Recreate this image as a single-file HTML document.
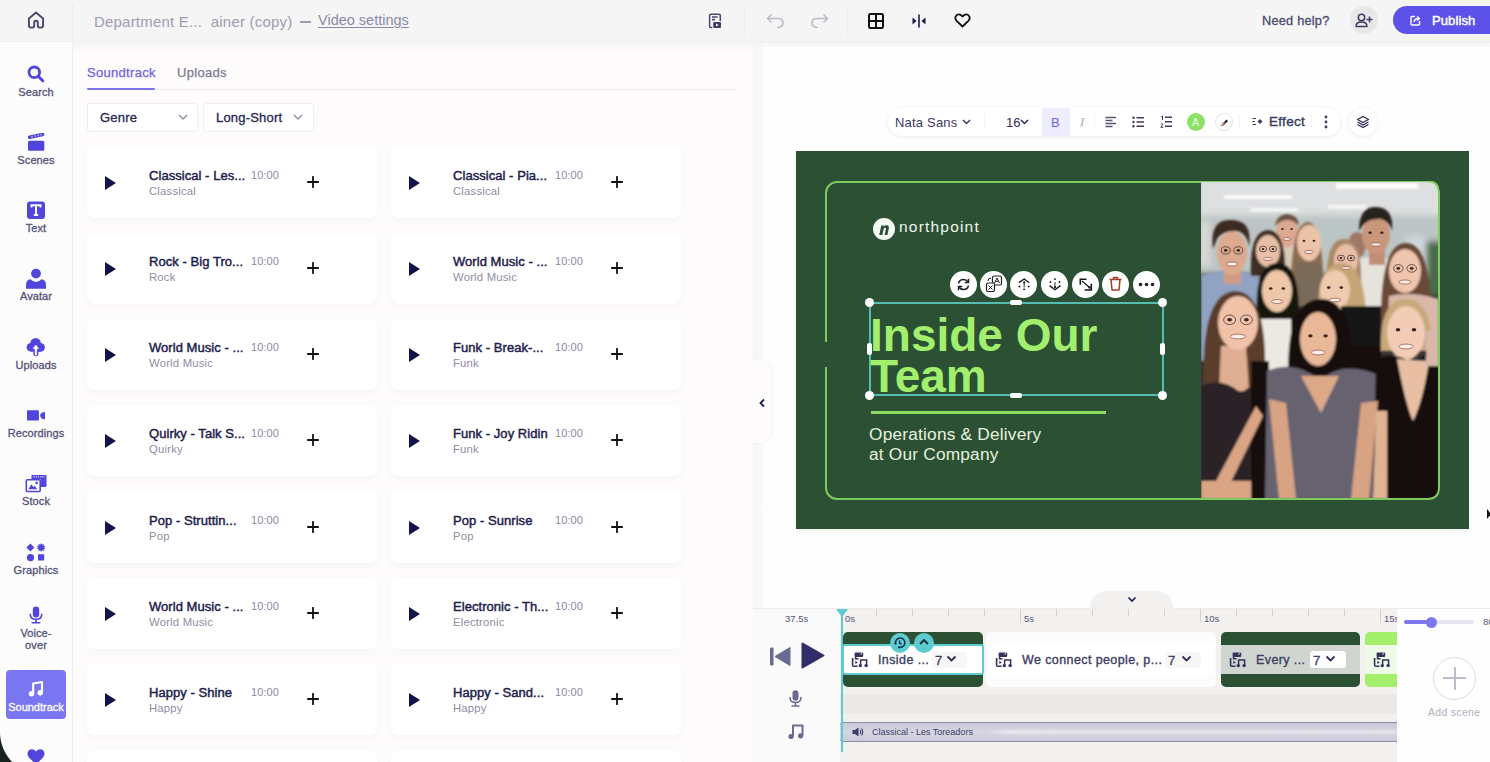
<!DOCTYPE html>
<html><head><meta charset="utf-8">
<style>
*{margin:0;padding:0;box-sizing:border-box}
html,body{width:1490px;height:762px;overflow:hidden;background:#fbf9f9;font-family:"Liberation Sans",sans-serif;position:relative}
body>div{position:absolute}
#hdr{left:0;top:0;width:1490px;height:42px;background:#f5f5f5;border-bottom:1px solid #efeeed}
#side{left:0;top:42px;width:73px;height:720px;background:#fdfcfc;border-right:1px solid #f1eeee}
.si{position:absolute;left:0;width:72px;text-align:center;font-size:11px;color:#525276;-webkit-text-stroke:0.3px #525276;letter-spacing:0.1px}
.sic{position:absolute;left:26px;width:20px;height:20px}
#panel{left:73px;top:42px;width:682px;height:720px;background:#fdfbfb}
.card{position:absolute;width:290px;height:71px;background:#fff;border-radius:7px;box-shadow:0 3px 6px rgba(140,110,110,0.05)}
.card .pl{position:absolute;left:18px;top:29px;width:0;height:0;border-left:11px solid #14134a;border-top:7px solid transparent;border-bottom:7px solid transparent}
.card .t{position:absolute;left:62px;top:20.5px;font-size:13px;color:#1d1c4c;white-space:nowrap;-webkit-text-stroke:0.45px #1d1c4c;letter-spacing:0.05px}
.card .s{position:absolute;left:62px;top:37.5px;font-size:11.3px;color:#8e8da2;white-space:nowrap;letter-spacing:0.2px}
.card .d{position:absolute;left:164px;top:21.5px;font-size:11px;color:#8b8aa0;letter-spacing:0.1px}
.card .p{position:absolute;left:219.5px;top:28.7px}
.clipicon{position:absolute;width:17px;height:15px}
.clipicon:before{content:"";position:absolute;left:0;top:4px;width:8px;height:10px;border-left:2px solid #3c3b62;border-bottom:2px solid #3c3b62}
.clipicon:after{content:"";position:absolute;left:4px;top:0;width:9px;height:7px;background:#3c3b62;border-radius:1px}

</style></head><body>
<div id="hdr"></div>
<svg style="position:absolute;left:27px;top:11px" width="18" height="18" viewBox="0 0 18 18"><path d="M1.9 7.6 L9 1.6 L16.1 7.6 V14.6 Q16.1 16.6 14.1 16.6 H12.6 Q10.8 16.6 10.8 14.6 V12 Q10.8 9.8 9 9.8 Q7.2 9.8 7.2 12 V14.6 Q7.2 16.6 5.4 16.6 H3.9 Q1.9 16.6 1.9 14.6 Z" fill="none" stroke="#47456c" stroke-width="1.9" stroke-linejoin="round"/></svg>
<div style="left:72px;top:4px;width:1px;height:34px;background:#eceaea"></div>
<div style="left:94px;top:12.5px;font-size:15px;color:#9d9cb0;white-space:nowrap;letter-spacing:0.2px">Department E...&nbsp; ainer (copy)</div><div style="left:300px;top:21px;width:11px;height:1.5px;background:#9d9cb0"></div><div style="left:318px;top:12px;font-size:14.5px;color:#8b8aa6;white-space:nowrap;letter-spacing:0px;text-decoration:underline;text-underline-offset:2px">Video settings</div>
<svg style="position:absolute;left:708px;top:13px" width="14" height="16" viewBox="0 0 14 16"><path d="M12.3 8 V2.6 Q12.3 1.3 11 1.3 H3 Q1.6 1.3 1.6 2.6 V13.4 Q1.6 14.6 3 14.6 H4.3" fill="none" stroke="#4a4872" stroke-width="1.5"/><path d="M4 4 H9.5 M4 6.6 H7" stroke="#4a4872" stroke-width="1.6"/><rect x="5.2" y="9" width="7.8" height="6" rx="1" fill="#3f3d68"/><path d="M8 10.4 L10.6 12 L8 13.6Z" fill="#fff"/></svg>
<div style="left:744px;top:6px;width:1px;height:30px;background:#efeded"></div>
<svg style="position:absolute;left:766px;top:13px" width="20" height="16" viewBox="0 0 20 16"><path d="M5 2 L1.5 5.5 L5 9 M1.8 5.5 H12 Q17 5.5 17 10 Q17 14 12 14.5" fill="none" stroke="#bdbcc9" stroke-width="1.7" stroke-linecap="round" stroke-linejoin="round"/></svg>
<svg style="position:absolute;left:809px;top:13px" width="20" height="16" viewBox="0 0 20 16"><path d="M15 2 L18.5 5.5 L15 9 M18.2 5.5 H8 Q3 5.5 3 10 Q3 14 8 14.5" fill="none" stroke="#bdbcc9" stroke-width="1.7" stroke-linecap="round" stroke-linejoin="round"/></svg>
<div style="left:847px;top:6px;width:1px;height:30px;background:#efeded"></div>
<svg style="position:absolute;left:868px;top:13px" width="16" height="16" viewBox="0 0 16 16"><rect x="1" y="1" width="14" height="14" rx="1.2" fill="none" stroke="#111" stroke-width="2"/><path d="M8 1 V15 M1 8 H15" stroke="#111" stroke-width="2"/></svg>
<svg style="position:absolute;left:911px;top:13px" width="16" height="16" viewBox="0 0 16 16"><path d="M8 1.5 V14.5" stroke="#1b1a4e" stroke-width="1.6"/><path d="M1.5 4.5 L5.5 8 L1.5 11.5Z M14.5 4.5 L10.5 8 L14.5 11.5Z" fill="#1b1a4e"/></svg>
<svg style="position:absolute;left:954px;top:13px" width="17" height="15" viewBox="0 0 17 15"><path d="M8.5 13.5 L2.6 7.8 Q0.5 5.6 1.8 3.2 Q3.4 0.8 6 1.6 Q7.6 2.2 8.5 3.6 Q9.4 2.2 11 1.6 Q13.6 0.8 15.2 3.2 Q16.5 5.6 14.4 7.8 Z" fill="none" stroke="#111" stroke-width="1.8" stroke-linejoin="round"/></svg>
<div style="left:1262px;top:12.5px;font-size:12.8px;color:#4a4a6c;white-space:nowrap;letter-spacing:0.2px;-webkit-text-stroke:0.3px #4a4a6c">Need help?</div>
<div style="left:1350px;top:6px;width:28px;height:28px;border-radius:14px;background:#e9e7e7"></div>
<svg style="position:absolute;left:1355px;top:13px" width="18" height="15" viewBox="0 0 18 15"><circle cx="6.5" cy="4.5" r="3.2" fill="none" stroke="#3f3e66" stroke-width="1.5"/><path d="M1 13.5 Q1 9 6.5 9 Q12 9 12 13.5 Z" fill="none" stroke="#3f3e66" stroke-width="1.5" stroke-linejoin="round"/><path d="M14.5 3.5 V9.5 M11.5 6.5 H17.5" stroke="#3f3e66" stroke-width="1.5"/></svg>
<div style="left:1393px;top:6px;width:120px;height:28px;border-radius:14px;background:#5c51e8"></div>
<svg style="position:absolute;left:1410px;top:15px" width="11" height="11" viewBox="0 0 11 11"><path d="M5 1.5 H2 Q1 1.5 1 2.5 V9 Q1 10 2 10 H8.5 Q9.5 10 9.5 9 V6" fill="none" stroke="#fff" stroke-width="1.4"/><path d="M4 7 Q4.5 3.5 8.5 3.5 M7 1.5 L9.5 3.5 L7 5.5" fill="none" stroke="#fff" stroke-width="1.4" stroke-linejoin="round"/></svg>
<div style="left:1432px;top:12.5px;font-size:13px;color:#fff;white-space:nowrap;letter-spacing:0.1px;-webkit-text-stroke:0.45px #fff">Publish</div>

<div id="side"></div>
<svg style="position:absolute;left:27px;top:65px" width="18" height="18" viewBox="0 0 18 18"><circle cx="7.3" cy="7.3" r="5.3" fill="none" stroke="#5046dc" stroke-width="2.8"/><path d="M11.2 11.2 L15.8 15.8" stroke="#5046dc" stroke-width="3" stroke-linecap="round"/></svg>
<div class="si" style="top:86px">Search</div>
<svg style="position:absolute;left:27px;top:133px" width="19" height="19" viewBox="0 0 19 19"><path d="M2.6 4.2 L15.6 1.5" stroke="#5046dc" stroke-width="3.5" stroke-linecap="round"/><path d="M4.5 3.8 L5.5 3.6 M7.6 3.15 L8.6 2.95 M10.7 2.5 L11.7 2.3 M13.6 1.9 L14.4 1.75" stroke="#fff" stroke-width="1.3"/><rect x="1" y="7.7" width="16.3" height="10.1" rx="1.5" fill="#5046dc"/></svg>
<div class="si" style="top:154px">Scenes</div>
<svg style="position:absolute;left:27px;top:201px" width="18" height="18" viewBox="0 0 18 18"><rect x="0" y="0.5" width="18" height="17.5" rx="3" fill="#5046dc"/><path d="M4.5 6.5 V4.3 H13.5 V6.5 M9 4.3 V14 M6.8 14 H11.2" fill="none" stroke="#fff" stroke-width="1.9"/></svg>
<div class="si" style="top:222px">Text</div>
<svg style="position:absolute;left:26px;top:268px" width="20" height="21" viewBox="0 0 20 21"><circle cx="10" cy="5.6" r="4.9" fill="#5046dc"/><path d="M0 20.7 V17 Q0 11.6 4.6 11.2 Q7 13.9 10 13.9 Q13 13.9 15.4 11.2 Q20 11.6 20 17 V20.7 Z" fill="#5046dc"/></svg>
<div class="si" style="top:290px">Avatar</div>
<svg style="position:absolute;left:26px;top:337px" width="20" height="20" viewBox="0 0 20 20"><circle cx="9.6" cy="6.3" r="5.3" fill="#5046dc"/><circle cx="4.9" cy="10.3" r="4.3" fill="#5046dc"/><circle cx="14.5" cy="10.3" r="4.4" fill="#5046dc"/><rect x="4.9" y="8" width="9.6" height="6.7" fill="#5046dc"/><rect x="7.3" y="10" width="5.1" height="9.2" rx="2.5" fill="#5046dc"/><path d="M9.85 17.4 V10" stroke="#fff" stroke-width="2.1" stroke-linecap="round"/><path d="M7.1 11.6 L9.85 8.1 L12.6 11.6 Z" fill="#fff" stroke="#fff" stroke-width="0.6" stroke-linejoin="round"/></svg>
<div class="si" style="top:359px">Uploads</div>
<svg style="position:absolute;left:27px;top:410px" width="19" height="11" viewBox="0 0 19 11"><rect x="0" y="0.3" width="11.9" height="10.3" rx="0.6" fill="#5046dc"/><path d="M13.2 5.6 Q13.2 3.4 15.2 2.6 L18 1.9 V9.6 L15.2 8.7 Q13.2 8 13.2 5.6 Z" fill="#5046dc"/></svg>
<div class="si" style="top:427px">Recordings</div>
<svg style="position:absolute;left:25px;top:474px" width="22" height="19" viewBox="0 0 22 19"><rect x="6.5" y="1" width="15" height="12" rx="1.2" fill="#5046dc"/><path d="M8.5 2.8 H20" stroke="#fff" stroke-width="1" stroke-dasharray="1.2 1"/><rect x="0.5" y="5" width="15.5" height="13.3" rx="1.3" fill="#fff"/><rect x="1.3" y="5.8" width="13.9" height="11.7" rx="1" fill="none" stroke="#5046dc" stroke-width="1.6"/><path d="M3.4 15.2 L6.3 10.3 L8.4 13 L9.6 11.8 L12.3 15.2 Z" fill="#5046dc"/><circle cx="11.7" cy="8.9" r="1.3" fill="#5046dc"/></svg>
<div class="si" style="top:495px">Stock</div>
<svg style="position:absolute;left:26px;top:543px" width="20" height="19" viewBox="0 0 20 19"><path d="M4.4 0.5 L8.4 4.5 L4.4 8.5 L0.4 4.5 Z" fill="#5046dc"/><path d="M15.10 0.00 L16.03 1.65 L17.75 0.86 L17.53 2.74 L19.38 3.11 L18.10 4.50 L19.38 5.89 L17.53 6.26 L17.75 8.14 L16.03 7.35 L15.10 9.00 L14.17 7.35 L12.45 8.14 L12.67 6.26 L10.82 5.89 L12.10 4.50 L10.82 3.11 L12.67 2.74 L12.45 0.86 L14.17 1.65 Z" fill="#5046dc"/><circle cx="4.5" cy="14.6" r="3.6" fill="#5046dc"/><rect x="12" y="11.2" width="6.2" height="6.4" rx="0.5" fill="#5046dc"/></svg>
<div class="si" style="top:564px">Graphics</div>
<svg style="position:absolute;left:29px;top:606px" width="14" height="18" viewBox="0 0 14 18"><rect x="3.8" y="0.5" width="6.4" height="11" rx="3.2" fill="#5046dc"/><path d="M1.3 8.2 Q1.3 13.3 7 13.3 Q12.7 13.3 12.7 8.2 M7 13.3 V16.5 M3.3 16.7 H10.7" fill="none" stroke="#5046dc" stroke-width="1.6" stroke-linecap="round"/></svg>
<div class="si" style="top:627px;line-height:12px">Voice-<br>over</div>
<div style="left:6px;top:670px;width:60px;height:49px;border-radius:4px;background:#7a76f1"></div>
<svg style="position:absolute;left:28px;top:681px" width="16" height="16" viewBox="0 0 16 16"><path d="M5.2 12.5 V2.5 L14 1 V11.5" fill="none" stroke="#fff" stroke-width="2.1" stroke-linejoin="round"/><circle cx="3.5" cy="12.7" r="2.7" fill="#fff"/><circle cx="12.2" cy="11.8" r="2.7" fill="#fff"/></svg>
<div class="si" style="top:701px;color:#fff;-webkit-text-stroke:0.3px #fff;left:6px;width:60px;font-size:11px;letter-spacing:0">Soundtrack</div>
<svg style="position:absolute;left:27px;top:749px" width="18" height="16" viewBox="0 0 18 16"><path d="M9 15.5 L2.4 9 Q0 6.5 0.6 3.8 Q1.4 0.4 4.8 0.3 Q7.4 0.3 9 2.6 Q10.6 0.3 13.2 0.3 Q16.6 0.4 17.4 3.8 Q18 6.5 15.6 9 Z" fill="#5046dc"/></svg>
<div style="left:0;top:732px;width:46px;height:30px;background:radial-gradient(circle at 43px 0px, rgba(0,0,0,0) 42.5px, #16241d 43.5px)"></div>

<div id="panel"></div>
<div id="hdrshadow" style="left:73px;top:42px;width:680px;height:10px;background:linear-gradient(180deg,#f6f5f4,rgba(253,251,251,0))"></div>
<div style="left:87px;top:65px;font-size:13px;color:#6d63dd;white-space:nowrap;letter-spacing:0.3px;-webkit-text-stroke:0.25px #6d63dd">Soundtrack</div>
<div style="left:177px;top:65px;font-size:13px;color:#7c7b92;white-space:nowrap;letter-spacing:0.3px;-webkit-text-stroke:0.25px #7c7b92">Uploads</div>
<div style="left:87px;top:89px;width:648px;height:1px;background:#eeeaea"></div>
<div style="left:87px;top:88px;width:68px;height:2px;background:#7d76ea;border-radius:1px"></div>
<div style="left:87px;top:103px;width:111px;height:29px;background:#fff;border:1px solid #f1eeee;border-radius:3px"></div>
<div style="left:100px;top:110px;font-size:13px;color:#262650;white-space:nowrap;letter-spacing:0.2px;-webkit-text-stroke:0.3px #262650">Genre</div>
<svg style="position:absolute;left:178px;top:114px" width="10" height="6" viewBox="0 0 10 6"><path d="M1 1 L5 5 L9 1" fill="none" stroke="#8b8aa0" stroke-width="1.3"/></svg>
<div style="left:203px;top:103px;width:111px;height:29px;background:#fff;border:1px solid #f1eeee;border-radius:3px"></div>
<div style="left:216px;top:110px;font-size:13px;color:#262650;white-space:nowrap;letter-spacing:0.2px;-webkit-text-stroke:0.3px #262650">Long-Short</div>
<svg style="position:absolute;left:293px;top:114px" width="10" height="6" viewBox="0 0 10 6"><path d="M1 1 L5 5 L9 1" fill="none" stroke="#8b8aa0" stroke-width="1.3"/></svg>

<div class="card" style="left:87px;top:147px"><div class="pl"></div><div class="t">Classical - Les...</div><div class="s">Classical</div><div class="d">10:00</div><svg class="p" width="12" height="12" viewBox="0 0 12 12"><path d="M6 0.8 V11.2 M0.8 6 H11.2" stroke="#111" stroke-width="1.8" stroke-linecap="round"/></svg></div>
<div class="card" style="left:391px;top:147px"><div class="pl"></div><div class="t">Classical - Pia...</div><div class="s">Classical</div><div class="d">10:00</div><svg class="p" width="12" height="12" viewBox="0 0 12 12"><path d="M6 0.8 V11.2 M0.8 6 H11.2" stroke="#111" stroke-width="1.8" stroke-linecap="round"/></svg></div>
<div class="card" style="left:87px;top:233px"><div class="pl"></div><div class="t">Rock - Big Tro...</div><div class="s">Rock</div><div class="d">10:00</div><svg class="p" width="12" height="12" viewBox="0 0 12 12"><path d="M6 0.8 V11.2 M0.8 6 H11.2" stroke="#111" stroke-width="1.8" stroke-linecap="round"/></svg></div>
<div class="card" style="left:391px;top:233px"><div class="pl"></div><div class="t">World Music - ...</div><div class="s">World Music</div><div class="d">10:00</div><svg class="p" width="12" height="12" viewBox="0 0 12 12"><path d="M6 0.8 V11.2 M0.8 6 H11.2" stroke="#111" stroke-width="1.8" stroke-linecap="round"/></svg></div>
<div class="card" style="left:87px;top:319px"><div class="pl"></div><div class="t">World Music - ...</div><div class="s">World Music</div><div class="d">10:00</div><svg class="p" width="12" height="12" viewBox="0 0 12 12"><path d="M6 0.8 V11.2 M0.8 6 H11.2" stroke="#111" stroke-width="1.8" stroke-linecap="round"/></svg></div>
<div class="card" style="left:391px;top:319px"><div class="pl"></div><div class="t">Funk - Break-...</div><div class="s">Funk</div><div class="d">10:00</div><svg class="p" width="12" height="12" viewBox="0 0 12 12"><path d="M6 0.8 V11.2 M0.8 6 H11.2" stroke="#111" stroke-width="1.8" stroke-linecap="round"/></svg></div>
<div class="card" style="left:87px;top:405px"><div class="pl"></div><div class="t">Quirky - Talk S...</div><div class="s">Quirky</div><div class="d">10:00</div><svg class="p" width="12" height="12" viewBox="0 0 12 12"><path d="M6 0.8 V11.2 M0.8 6 H11.2" stroke="#111" stroke-width="1.8" stroke-linecap="round"/></svg></div>
<div class="card" style="left:391px;top:405px"><div class="pl"></div><div class="t">Funk - Joy Ridin</div><div class="s">Funk</div><div class="d">10:00</div><svg class="p" width="12" height="12" viewBox="0 0 12 12"><path d="M6 0.8 V11.2 M0.8 6 H11.2" stroke="#111" stroke-width="1.8" stroke-linecap="round"/></svg></div>
<div class="card" style="left:87px;top:492px"><div class="pl"></div><div class="t">Pop - Struttin...</div><div class="s">Pop</div><div class="d">10:00</div><svg class="p" width="12" height="12" viewBox="0 0 12 12"><path d="M6 0.8 V11.2 M0.8 6 H11.2" stroke="#111" stroke-width="1.8" stroke-linecap="round"/></svg></div>
<div class="card" style="left:391px;top:492px"><div class="pl"></div><div class="t">Pop - Sunrise</div><div class="s">Pop</div><div class="d">10:00</div><svg class="p" width="12" height="12" viewBox="0 0 12 12"><path d="M6 0.8 V11.2 M0.8 6 H11.2" stroke="#111" stroke-width="1.8" stroke-linecap="round"/></svg></div>
<div class="card" style="left:87px;top:578px"><div class="pl"></div><div class="t">World Music - ...</div><div class="s">World Music</div><div class="d">10:00</div><svg class="p" width="12" height="12" viewBox="0 0 12 12"><path d="M6 0.8 V11.2 M0.8 6 H11.2" stroke="#111" stroke-width="1.8" stroke-linecap="round"/></svg></div>
<div class="card" style="left:391px;top:578px"><div class="pl"></div><div class="t">Electronic - Th...</div><div class="s">Electronic</div><div class="d">10:00</div><svg class="p" width="12" height="12" viewBox="0 0 12 12"><path d="M6 0.8 V11.2 M0.8 6 H11.2" stroke="#111" stroke-width="1.8" stroke-linecap="round"/></svg></div>
<div class="card" style="left:87px;top:664px"><div class="pl"></div><div class="t">Happy - Shine</div><div class="s">Happy</div><div class="d">10:00</div><svg class="p" width="12" height="12" viewBox="0 0 12 12"><path d="M6 0.8 V11.2 M0.8 6 H11.2" stroke="#111" stroke-width="1.8" stroke-linecap="round"/></svg></div>
<div class="card" style="left:391px;top:664px"><div class="pl"></div><div class="t">Happy - Sand...</div><div class="s">Happy</div><div class="d">10:00</div><svg class="p" width="12" height="12" viewBox="0 0 12 12"><path d="M6 0.8 V11.2 M0.8 6 H11.2" stroke="#111" stroke-width="1.8" stroke-linecap="round"/></svg></div>
<div class="card" style="left:87px;top:750px"></div>
<div class="card" style="left:391px;top:750px"></div>
<div style="left:753px;top:42px;width:737px;height:567px;background:#fefefe"></div>
<div style="left:753px;top:42px;width:12px;height:567px;background:linear-gradient(90deg,#f7f5f5 0%,#f8f7f7 50%,#fefefe 100%)"></div>
<div style="left:753px;top:42px;width:737px;height:6px;background:linear-gradient(180deg,#f3f1f1,rgba(254,254,254,0))"></div>
<div style="left:745px;top:360px;width:26px;height:83px;background:#fdfbfb;border-radius:0 12px 12px 0;box-shadow:2px 0 3px rgba(0,0,0,0.04)"></div>
<svg style="position:absolute;left:758px;top:398px" width="8" height="10" viewBox="0 0 8 10"><path d="M6 1.5 L2.5 5 L6 8.5" fill="none" stroke="#1b1a4e" stroke-width="1.8"/></svg>
<!-- toolbar -->
<div style="left:888px;top:108px;width:452px;height:28px;border-radius:14px;background:#fff;box-shadow:0 1px 4px rgba(60,40,40,0.09)"></div>
<div style="left:895px;top:115px;font-size:13px;color:#3c3b62;white-space:nowrap;letter-spacing:0.2px">Nata Sans</div>
<svg style="position:absolute;left:962px;top:119px" width="9" height="6" viewBox="0 0 9 6"><path d="M1 1 L4.5 4.5 L8 1" fill="none" stroke="#3c3b62" stroke-width="1.5"/></svg>
<div style="left:984px;top:114px;width:1px;height:16px;background:#f5f3f3"></div>
<div style="left:1006px;top:115px;font-size:13px;color:#2d2c55;white-space:nowrap">16</div>
<svg style="position:absolute;left:1020px;top:119px" width="9" height="6" viewBox="0 0 9 6"><path d="M1 1 L4.5 4.5 L8 1" fill="none" stroke="#2d2c55" stroke-width="1.5"/></svg>
<div style="left:1042px;top:108px;width:28px;height:28px;background:#eeedfd"></div>
<div style="left:1051px;top:115px;font-size:13px;color:#6b63e0;white-space:nowrap">B</div>
<div style="left:1080px;top:114px;font-size:13px;color:#a9a8b8;font-family:'Liberation Serif',serif;font-style:italic">I</div>
<div style="left:1094px;top:114px;width:1px;height:16px;background:#f5f3f3"></div>
<svg style="position:absolute;left:1105px;top:116px" width="12" height="12" viewBox="0 0 12 12"><path d="M0.5 1.5 H11 M0.5 4.5 H7.5 M0.5 7.5 H11 M0.5 10.5 H7.5" stroke="#55547a" stroke-width="1.4"/></svg>
<svg style="position:absolute;left:1132px;top:116px" width="13" height="12" viewBox="0 0 13 12"><circle cx="1.5" cy="1.8" r="1.2" fill="#3c3b62"/><circle cx="1.5" cy="6" r="1.2" fill="#3c3b62"/><circle cx="1.5" cy="10.2" r="1.2" fill="#3c3b62"/><path d="M4.5 1.8 H12 M4.5 6 H12 M4.5 10.2 H12" stroke="#3c3b62" stroke-width="1.4"/></svg>
<svg style="position:absolute;left:1160px;top:115px" width="13" height="14" viewBox="0 0 13 14"><path d="M1.5 1.5 L2.5 0.8 V5" fill="none" stroke="#3c3b62" stroke-width="1"/><path d="M0.8 9.3 Q1.5 8.2 2.5 8.7 Q3.2 9.3 2.2 10.5 L0.8 12.3 H3.3" fill="none" stroke="#3c3b62" stroke-width="1"/><path d="M5 2.3 H12 M5 6.8 H12 M5 11.3 H12" stroke="#3c3b62" stroke-width="1.4"/></svg>
<div style="left:1187px;top:113px;width:18px;height:18px;border-radius:9px;background:#8be264"></div>
<div style="left:1192px;top:116px;font-size:10.5px;color:#f4fff0">A</div>
<div style="left:1215px;top:113px;width:18px;height:18px;border-radius:9px;background:#fff;border:1px solid #e6e4e4"></div>
<svg style="position:absolute;left:1218px;top:116px" width="12" height="12" viewBox="0 0 12 12"><path d="M3 9 L2 10.5 L4 10 Z" fill="#c05a3a"/><path d="M3.5 8.5 L8.5 3.5 L10 5 L5 10 Z" fill="#1d1c3f"/><path d="M3.5 8.5 L6 6 L7 7 L5 10 Z" fill="#e08a60"/></svg>
<div style="left:1239px;top:114px;width:1px;height:16px;background:#f5f3f3"></div>
<svg style="position:absolute;left:1252px;top:117px" width="11" height="9" viewBox="0 0 11 9"><path d="M0.5 1.5 H4 M0.5 4.5 H3 M0.5 7.5 H4" stroke="#3c3b62" stroke-width="1.2"/><path d="M5.5 4.5 L8 2 L10.5 4.5 L8 7 Z" fill="#3c3b62"/></svg>
<div style="left:1269px;top:114px;font-size:13.5px;color:#3c3b62;white-space:nowrap;letter-spacing:0.3px;-webkit-text-stroke:0.4px #3c3b62">Effect</div>
<div style="left:1311px;top:114px;width:1px;height:16px;background:#f5f3f3"></div>
<svg style="position:absolute;left:1323px;top:115px" width="6" height="14" viewBox="0 0 6 14"><circle cx="3" cy="2" r="1.4" fill="#3c3b62"/><circle cx="3" cy="7" r="1.4" fill="#3c3b62"/><circle cx="3" cy="12" r="1.4" fill="#3c3b62"/></svg>
<div style="left:1349px;top:108px;width:28px;height:28px;border-radius:14px;background:#fff;box-shadow:0 1px 4px rgba(60,40,40,0.09)"></div>
<svg style="position:absolute;left:1356px;top:115px" width="14" height="14" viewBox="0 0 14 14"><path d="M7 1.5 L12.5 4.5 L7 7.5 L1.5 4.5 Z" fill="none" stroke="#2d2c55" stroke-width="1.4" stroke-linejoin="round"/><path d="M1.5 7 L7 10 L12.5 7 M1.5 9.5 L7 12.5 L12.5 9.5" fill="none" stroke="#2d2c55" stroke-width="1.4" stroke-linejoin="round"/></svg>

<div style="left:796px;top:151px;width:673px;height:378px;background:#2b5034;box-shadow:0 2px 6px rgba(0,0,0,0.07)"></div>
<div style="left:825px;top:181px;width:615px;height:319px;border:2px solid #7fca5c;border-radius:12px"></div>
<div style="left:824px;top:342px;width:5px;height:25px;background:#2b5034"></div>
<svg style="position:absolute;left:1201px;top:181px" width="238" height="318" viewBox="0 0 238 318">
<defs><clipPath id="pc"><path d="M0 0 H226 Q238 0 238 12 V306 Q238 318 226 318 H0 Z"/></clipPath>
<filter id="bl" x="-10%" y="-10%" width="120%" height="120%"><feGaussianBlur stdDeviation="1.3"/></filter>
<filter id="bl2" x="-10%" y="-10%" width="120%" height="120%"><feGaussianBlur stdDeviation="3"/></filter><filter id="bl3" x="-10%" y="-10%" width="120%" height="120%"><feGaussianBlur stdDeviation="0.5"/></filter></defs>
<g clip-path="url(#pc)">
<rect width="238" height="318" fill="#3a3432"/>
<g filter="url(#bl2)">
<rect x="-5" y="-5" width="250" height="42" fill="#dedfe0"/>
<rect x="-5" y="34" width="250" height="60" fill="#bcc5c5"/>
<rect x="-5" y="40" width="14" height="45" fill="#d8d8d4"/>
<rect x="222" y="60" width="20" height="55" fill="#4a6a48"/>
<rect x="205" y="55" width="20" height="40" fill="#d0d8dc"/>
</g>
<g filter="url(#bl)">
<rect x="23" y="14" width="68" height="4" fill="#fafafa"/>
<rect x="50" y="27" width="47" height="3.5" fill="#f7f7f7"/>
<rect x="135" y="2" width="82" height="6" fill="#fcfcfc"/>
<rect x="127" y="24" width="38" height="3.5" fill="#f5f5f5"/>
<!-- man 3 back -->
<path d="M80 100 L78 62 H98 L100 100 Z" fill="#d8c8b8"/>
<ellipse cx="86" cy="50" rx="11" ry="16" fill="#dba890"/>
<path d="M74 45 Q76 33 87 33 Q97 34 98 45 Q92 38 86 39 Q79 39 74 45 Z" fill="#6a5244"/>
<!-- person behind woman5 -->
<ellipse cx="156" cy="64" rx="9" ry="13" fill="#a07868"/>
<!-- man 6 -->
<path d="M155 80 Q170 72 192 80 L195 140 H150 Z" fill="#e6e3dd"/>
<rect x="168" y="66" width="16" height="18" fill="#c08f74"/>
<ellipse cx="175" cy="54" rx="14" ry="19" fill="#c9967a"/>
<path d="M158 50 Q158 25 175 26 Q193 26 191 50 Q188 40 180 38 Q168 37 162 44 Z" fill="#28201c"/>
<!-- man 1 -->
<path d="M0 95 Q25 85 58 95 L62 180 H0 Z" fill="#90a3c2"/>
<rect x="23" y="85" width="17" height="18" fill="#cf9c82"/>
<ellipse cx="31" cy="72" rx="15" ry="22" fill="#dcaa8d"/>
<path d="M12 68 Q8 38 30 39 Q52 39 48 66 Q46 52 36 50 Q22 49 16 58 Z" fill="#3c2a20"/>

<!-- woman 2 -->
<path d="M50 95 Q48 50 67 49 Q86 50 84 95 Z" fill="#3e2e26"/>
<ellipse cx="67" cy="70" rx="12" ry="16" fill="#e8bfa6"/>

<!-- woman 4 -->
<path d="M90 125 Q88 42 107 41 Q124 42 122 125 Z" fill="#8c6c50"/>
<ellipse cx="108" cy="62" rx="12" ry="18" fill="#edc3a8"/>
<path d="M95 82 L120 82 L124 125 H92 Z" fill="#7a6a5a"/>
<!-- woman 5 -->
<path d="M126 105 Q124 58 143 58 Q162 58 160 105 Z" fill="#a88866"/>
<ellipse cx="145" cy="79" rx="12" ry="16" fill="#e9bda6"/>

<!-- woman 7 -->
<path d="M180 150 Q178 62 205 62 Q232 62 230 150 Z" fill="#6a4a38"/>
<path d="M188 115 Q210 110 238 118 V170 H186 Z" fill="#d9b8aa"/>
<ellipse cx="204" cy="90" rx="16" ry="22" fill="#efc5ad"/>

<!-- woman 8 asian -->
<path d="M57 150 Q50 82 77 82 Q102 82 97 150 Z" fill="#161210"/>
<path d="M60 138 H90 L92 215 H62 Z" fill="#ece8e2"/>
<ellipse cx="76" cy="110" rx="15" ry="21" fill="#eec7a8"/>
<!-- woman 9 blonde -->
<path d="M117 160 Q112 82 140 82 Q168 82 165 160 Z" fill="#c6a676"/>
<ellipse cx="134" cy="109" rx="15" ry="20" fill="#f0caae"/>
<path d="M140 125 H180 V250 H140 Z" fill="#161414"/>
<!-- woman 10 -->
<path d="M3 215 Q-2 110 35 110 Q70 112 63 215 Z" fill="#5a3e2c"/>
<path d="M20 165 L45 165 L48 210 L18 210 Z" fill="#e0ae92"/>
<ellipse cx="37" cy="142" rx="20" ry="27" fill="#f0c3a8"/>

<!-- woman 12 -->
<path d="M180 170 Q178 118 205 118 Q232 118 230 170 Z" fill="#c9a87c"/>
<ellipse cx="205" cy="152" rx="19" ry="27" fill="#f2ccb4"/>
<!-- woman 11 asian front -->
<path d="M88 210 Q82 118 120 118 Q156 118 150 205 Z" fill="#141110"/>
<ellipse cx="117" cy="158" rx="18" ry="27" fill="#e9b898"/>
<!-- bodies -->
<path d="M0 205 Q20 195 40 212 Q55 200 66 205 L66 318 H0 Z" fill="#2a2226"/>
<path d="M50 180 H68 V318 H50 Z" fill="#141010"/>
<path d="M150 165 H180 V318 H150 Z" fill="#121010"/>
<path d="M66 190 Q95 178 120 200 Q140 178 180 195 L182 318 H64 Z" fill="#666270"/>
<path d="M175 178 Q195 170 210 182 Q225 170 238 180 V318 H172 Z" fill="#121010"/>
<path d="M196 178 Q205 225 212 240 Q222 220 228 180 Z" fill="#e9bfa4"/>
<path d="M225 150 H238 V185 H225 Z" fill="#d8b8aa"/>
<path d="M55 225 L62 235 L28 305 L15 300 Z" fill="#d9a585"/>
<path d="M0 300 H50 V318 H0 Z" fill="#d9a585"/>
<path d="M68 218 L85 222 L95 318 H78 Z" fill="#d8a383"/>
<path d="M160 222 L177 220 L168 318 H150 Z" fill="#d8a383"/>
<path d="M175 230 H186 V318 H172 Z" fill="#e2b294"/>
<path d="M100 195 L120 232 L138 195 Z" fill="#dca888"/>
</g>
<g id="feat" filter="url(#bl3)">
<ellipse cx="24.7" cy="69.4" rx="4.5" ry="3.6" fill="none" stroke="#2a2020" stroke-opacity="0.75" stroke-width="0.9"/>
<ellipse cx="37.3" cy="69.4" rx="4.5" ry="3.6" fill="none" stroke="#2a2020" stroke-opacity="0.75" stroke-width="0.9"/>
<ellipse cx="62.0" cy="68.0" rx="3.6" ry="2.9" fill="none" stroke="#2a2020" stroke-opacity="0.75" stroke-width="0.9"/>
<ellipse cx="72.0" cy="68.0" rx="3.6" ry="2.9" fill="none" stroke="#2a2020" stroke-opacity="0.75" stroke-width="0.9"/>
<ellipse cx="140.0" cy="77.0" rx="3.6" ry="2.9" fill="none" stroke="#2a2020" stroke-opacity="0.75" stroke-width="0.9"/>
<ellipse cx="150.0" cy="77.0" rx="3.6" ry="2.9" fill="none" stroke="#2a2020" stroke-opacity="0.75" stroke-width="0.9"/>
<ellipse cx="197.3" cy="87.4" rx="4.8" ry="3.8" fill="none" stroke="#2a2020" stroke-opacity="0.75" stroke-width="0.9"/>
<ellipse cx="210.7" cy="87.4" rx="4.8" ry="3.8" fill="none" stroke="#2a2020" stroke-opacity="0.75" stroke-width="0.9"/>
<ellipse cx="28.6" cy="138.8" rx="6.0" ry="4.8" fill="none" stroke="#2a2020" stroke-opacity="0.75" stroke-width="0.9"/>
<ellipse cx="45.4" cy="138.8" rx="6.0" ry="4.8" fill="none" stroke="#2a2020" stroke-opacity="0.75" stroke-width="0.9"/>
<ellipse cx="24.7" cy="69.4" rx="1.8" ry="1.3" fill="#3a2822"/>
<ellipse cx="37.3" cy="69.4" rx="1.8" ry="1.3" fill="#3a2822"/>
<ellipse cx="31" cy="83.0" rx="5.7" ry="2.0" fill="#f8f0ea" stroke="#a05a50" stroke-width="0.8"/>
<ellipse cx="62.0" cy="68.1" rx="1.4" ry="1.1" fill="#3a2822"/>
<ellipse cx="72.0" cy="68.1" rx="1.4" ry="1.1" fill="#3a2822"/>
<ellipse cx="67" cy="78.0" rx="4.6" ry="1.4" fill="#f8f0ea" stroke="#a05a50" stroke-width="0.8"/>
<ellipse cx="81.4" cy="48.1" rx="1.3" ry="1.0" fill="#3a2822"/>
<ellipse cx="90.6" cy="48.1" rx="1.3" ry="1.0" fill="#3a2822"/>
<ellipse cx="86" cy="58.0" rx="4.2" ry="1.4" fill="#f8f0ea" stroke="#a05a50" stroke-width="0.8"/>
<ellipse cx="103.0" cy="59.8" rx="1.4" ry="1.1" fill="#3a2822"/>
<ellipse cx="113.0" cy="59.8" rx="1.4" ry="1.1" fill="#3a2822"/>
<ellipse cx="108" cy="71.0" rx="4.6" ry="1.6" fill="#f8f0ea" stroke="#a05a50" stroke-width="0.8"/>
<ellipse cx="140.0" cy="77.1" rx="1.4" ry="1.1" fill="#3a2822"/>
<ellipse cx="150.0" cy="77.1" rx="1.4" ry="1.1" fill="#3a2822"/>
<ellipse cx="145" cy="87.0" rx="4.6" ry="1.4" fill="#f8f0ea" stroke="#a05a50" stroke-width="0.8"/>
<ellipse cx="169.1" cy="51.7" rx="1.7" ry="1.3" fill="#3a2822"/>
<ellipse cx="180.9" cy="51.7" rx="1.7" ry="1.3" fill="#3a2822"/>
<ellipse cx="175" cy="63.5" rx="5.3" ry="1.7" fill="#f8f0ea" stroke="#a05a50" stroke-width="0.8"/>
<ellipse cx="197.3" cy="87.4" rx="1.9" ry="1.4" fill="#3a2822"/>
<ellipse cx="210.7" cy="87.4" rx="1.9" ry="1.4" fill="#3a2822"/>
<ellipse cx="204" cy="101.0" rx="6.1" ry="2.0" fill="#f8f0ea" stroke="#a05a50" stroke-width="0.8"/>
<ellipse cx="69.7" cy="107.5" rx="1.8" ry="1.3" fill="#3a2822"/>
<ellipse cx="82.3" cy="107.5" rx="1.8" ry="1.3" fill="#3a2822"/>
<ellipse cx="76" cy="120.5" rx="5.7" ry="1.9" fill="#f8f0ea" stroke="#a05a50" stroke-width="0.8"/>
<ellipse cx="127.7" cy="106.6" rx="1.8" ry="1.3" fill="#3a2822"/>
<ellipse cx="140.3" cy="106.6" rx="1.8" ry="1.3" fill="#3a2822"/>
<ellipse cx="134" cy="119.0" rx="5.7" ry="1.8" fill="#f8f0ea" stroke="#a05a50" stroke-width="0.8"/>
<ellipse cx="28.6" cy="138.8" rx="2.4" ry="1.8" fill="#3a2822"/>
<ellipse cx="45.4" cy="138.8" rx="2.4" ry="1.8" fill="#3a2822"/>
<ellipse cx="37" cy="155.5" rx="7.6" ry="2.4" fill="#f8f0ea" stroke="#a05a50" stroke-width="0.8"/>
<ellipse cx="109.4" cy="154.8" rx="2.2" ry="1.6" fill="#3a2822"/>
<ellipse cx="124.6" cy="154.8" rx="2.2" ry="1.6" fill="#3a2822"/>
<ellipse cx="117" cy="171.5" rx="6.8" ry="2.4" fill="#f8f0ea" stroke="#a05a50" stroke-width="0.8"/>
<ellipse cx="197.0" cy="148.8" rx="2.3" ry="1.7" fill="#3a2822"/>
<ellipse cx="213.0" cy="148.8" rx="2.3" ry="1.7" fill="#3a2822"/>
<ellipse cx="205" cy="165.5" rx="7.2" ry="2.4" fill="#f8f0ea" stroke="#a05a50" stroke-width="0.8"/>
</g>
</g>
<path d="M0 0 H226 Q238 0 238 12 V306 Q238 318 226 318 H0" fill="none" stroke="#7fca5c" stroke-width="2"/>
</svg>

<svg style="position:absolute;left:873px;top:218px" width="22" height="22" viewBox="0 0 22 22"><circle cx="11" cy="11" r="11" fill="#f4f8f2"/><path d="M6.2 17 L8.3 7.5 H11 L10.8 8.6 Q12 7.2 13.8 7.3 Q16.4 7.6 15.8 10.5 L14.4 17 H11.6 L12.9 11 Q13.1 9.8 12.1 9.8 Q10.9 9.8 10.6 11.2 L9.3 17 Z" fill="#2b5034"/></svg>
<div style="left:899px;top:218px;font-size:15.5px;color:#f0f6ec;white-space:nowrap;letter-spacing:1.2px">northpoint</div>
<!-- selection -->
<div style="left:869px;top:302px;width:295px;height:94px;border:2px solid #55bdb0"></div>
<div style="left:865px;top:298px;width:9px;height:9px;border-radius:5px;background:#fff"></div>
<div style="left:1158px;top:298px;width:9px;height:9px;border-radius:5px;background:#fff"></div>
<div style="left:865px;top:391px;width:9px;height:9px;border-radius:5px;background:#fff"></div>
<div style="left:1158px;top:391px;width:9px;height:9px;border-radius:5px;background:#fff"></div>
<div style="left:1010px;top:300px;width:12px;height:5px;border-radius:2px;background:#fff"></div>
<div style="left:1010px;top:393px;width:12px;height:5px;border-radius:2px;background:#fff"></div>
<div style="left:867px;top:343px;width:5px;height:12px;border-radius:2px;background:#fff"></div>
<div style="left:1160px;top:343px;width:5px;height:12px;border-radius:2px;background:#fff"></div>
<div style="left:870px;top:315px;font-size:46px;line-height:41px;color:#a2ef6e;font-weight:bold;white-space:nowrap;letter-spacing:0px">Inside Our<br>Team</div>
<div style="left:871px;top:411px;width:235px;height:3px;background:#8ddd5f"></div>
<div style="left:869px;top:424px;font-size:17.3px;line-height:20px;color:#e6f2de;white-space:nowrap;letter-spacing:0.2px">Operations &amp; Delivery<br>at Our Company</div>
<!-- mini toolbar -->
<div style="left:950px;top:271px;width:27px;height:27px;border-radius:14px;background:#fff"></div>
<div style="left:980px;top:271px;width:27px;height:27px;border-radius:14px;background:#fff"></div>
<div style="left:1010px;top:271px;width:27px;height:27px;border-radius:14px;background:#fff"></div>
<div style="left:1041px;top:271px;width:27px;height:27px;border-radius:14px;background:#fff"></div>
<div style="left:1072px;top:271px;width:27px;height:27px;border-radius:14px;background:#fff"></div>
<div style="left:1102px;top:271px;width:27px;height:27px;border-radius:14px;background:#fff"></div>
<div style="left:1133px;top:271px;width:27px;height:27px;border-radius:14px;background:#fff"></div>
<svg style="position:absolute;left:956px;top:277px" width="15" height="15" viewBox="0 0 15 15"><path d="M2.5 6.5 Q3.3 2.5 7.5 2.5 Q10.5 2.5 12 5 M12.5 8.5 Q11.7 12.5 7.5 12.5 Q4.5 12.5 3 10" fill="none" stroke="#222" stroke-width="1.5"/><path d="M12.5 1.8 V5.5 H8.8 M2.5 13.2 V9.5 H6.2" fill="none" stroke="#222" stroke-width="1.5"/></svg>
<svg style="position:absolute;left:985px;top:275px" width="18" height="18" viewBox="0 0 18 18"><rect x="7.5" y="1" width="9" height="9" rx="1.5" fill="#fff" stroke="#222" stroke-width="1.2"/><path d="M9.5 8 L12 3 L14.5 8 M10.5 6.3 H13.5" fill="none" stroke="#222" stroke-width="1"/><rect x="1.5" y="8" width="8" height="8.5" rx="1.5" fill="#fff" stroke="#222" stroke-width="1.2"/><path d="M3.5 10.5 L7.5 14.5 M7.5 10.5 L3.5 14.5" stroke="#222" stroke-width="1"/><path d="M3 6 Q3 3 6 3" fill="none" stroke="#222" stroke-width="1"/></svg>
<svg style="position:absolute;left:1016px;top:276px" width="16" height="16" viewBox="0 0 16 16"><path d="M2.8 6.7 L8.2 3 L13.3 6.7" fill="none" stroke="#1a1a1a" stroke-width="1.4" stroke-linejoin="round"/><circle cx="3.5" cy="10.5" r="0.95" fill="#1a1a1a"/><circle cx="12.6" cy="10.5" r="0.95" fill="#1a1a1a"/><path d="M7.2 13.3 H9.2" stroke="#1a1a1a" stroke-width="1.3"/><path d="M8.2 11.5 V6.8" stroke="#555" stroke-width="1.2"/><circle cx="8.2" cy="6.4" r="1.1" fill="#1a1a1a"/></svg><svg style="position:absolute;left:1047px;top:276px" width="16" height="16" viewBox="0 0 16 16"><path d="M7 3.2 H9" stroke="#1a1a1a" stroke-width="1.3"/><circle cx="3.5" cy="6" r="0.95" fill="#1a1a1a"/><circle cx="12.5" cy="6" r="0.95" fill="#1a1a1a"/><path d="M2.5 9.6 L8 13.7 L13.5 9.6" fill="none" stroke="#1a1a1a" stroke-width="1.4" stroke-linejoin="round"/><path d="M8 6 V10.8" stroke="#555" stroke-width="1.2"/><circle cx="8" cy="11.2" r="1.1" fill="#1a1a1a"/></svg><svg style="position:absolute;left:1078px;top:276px" width="16" height="16" viewBox="0 0 16 16"><path d="M2.3 8.8 V3.3 H8.5 M13.3 7.8 V14 H6.6" fill="none" stroke="#1a1a1a" stroke-width="1.6"/><path d="M4 5 L11.5 11.5" stroke="#1a1a1a" stroke-width="1.2"/><circle cx="11.5" cy="11.5" r="1.2" fill="#1a1a1a"/></svg>
<svg style="position:absolute;left:1108px;top:276px" width="15" height="16" viewBox="0 0 15 16"><path d="M1.5 3.5 H13.5 M5.5 3.5 V1.5 H9.5 V3.5 M3 3.5 L4 14 H11 L12 3.5" fill="none" stroke="#a63a26" stroke-width="1.5" stroke-linejoin="round"/></svg>
<svg style="position:absolute;left:1138px;top:282px" width="17" height="5" viewBox="0 0 17 5"><circle cx="2.5" cy="2.5" r="1.8" fill="#222"/><circle cx="8.5" cy="2.5" r="1.8" fill="#222"/><circle cx="14.5" cy="2.5" r="1.8" fill="#222"/></svg>
<div style="left:1487px;top:509px;width:0;height:0;border-left:4px solid #111;border-top:5.5px solid transparent;border-bottom:5.5px solid transparent"></div>

<div style="left:753px;top:608px;width:737px;height:154px;background:#f3f0f0;border-top:1px solid #efebeb"></div>
<div style="left:753px;top:609px;width:87px;height:153px;background:#fbfafa"></div>
<div style="left:1090px;top:591px;width:83px;height:20px;background:#f3f0f0;border-radius:16px 16px 0 0"></div>
<svg style="position:absolute;left:1127px;top:596px" width="10" height="7" viewBox="0 0 10 7"><path d="M1.5 1.5 L5 5 L8.5 1.5" fill="none" stroke="#1b1a4e" stroke-width="1.6"/></svg>
<div style="left:785px;top:613px;font-size:9.5px;color:#55557a;white-space:nowrap">37.5s</div>
<div style="left:876px;top:609px;width:1px;height:7px;background:#d6d2d2"></div>
<div style="left:912px;top:609px;width:1px;height:7px;background:#d6d2d2"></div>
<div style="left:948px;top:609px;width:1px;height:7px;background:#d6d2d2"></div>
<div style="left:984px;top:609px;width:1px;height:7px;background:#d6d2d2"></div>
<div style="left:1020px;top:609px;width:1px;height:14px;background:#d6d2d2"></div>
<div style="left:1056px;top:609px;width:1px;height:7px;background:#d6d2d2"></div>
<div style="left:1092px;top:609px;width:1px;height:7px;background:#d6d2d2"></div>
<div style="left:1128px;top:609px;width:1px;height:7px;background:#d6d2d2"></div>
<div style="left:1164px;top:609px;width:1px;height:7px;background:#d6d2d2"></div>
<div style="left:1200px;top:609px;width:1px;height:14px;background:#d6d2d2"></div>
<div style="left:1236px;top:609px;width:1px;height:7px;background:#d6d2d2"></div>
<div style="left:1272px;top:609px;width:1px;height:7px;background:#d6d2d2"></div>
<div style="left:1308px;top:609px;width:1px;height:7px;background:#d6d2d2"></div>
<div style="left:1344px;top:609px;width:1px;height:7px;background:#d6d2d2"></div>
<div style="left:1380px;top:609px;width:1px;height:14px;background:#d6d2d2"></div>
<div style="left:845px;top:613px;font-size:9.5px;color:#55557a">0s</div>
<div style="left:1024px;top:613px;font-size:9.5px;color:#55557a">5s</div>
<div style="left:1204px;top:613px;font-size:9.5px;color:#55557a">10s</div>
<div style="left:1384px;top:613px;font-size:9.5px;color:#55557a">15s</div>
<!-- controls -->
<svg style="position:absolute;left:769px;top:647px" width="22" height="19" viewBox="0 0 22 19"><rect x="1" y="0.5" width="3.5" height="18" rx="1" fill="#6a6a92"/><path d="M21 0.5 V18.5 L6 9.5 Z" fill="#6a6a92" stroke="#6a6a92" stroke-width="1" stroke-linejoin="round"/></svg>
<svg style="position:absolute;left:801px;top:642px" width="24" height="27" viewBox="0 0 24 27"><path d="M1.5 1.5 V25.5 L22.5 13.5 Z" fill="#2f2e68" stroke="#2f2e68" stroke-width="2" stroke-linejoin="round"/></svg>
<svg style="position:absolute;left:789px;top:690px" width="13" height="17" viewBox="0 0 13 17"><rect x="3.5" y="0.3" width="6" height="10.5" rx="3" fill="#6a6a92"/><path d="M1 7.5 Q1 12.5 6.5 12.5 Q12 12.5 12 7.5 M6.5 12.5 V15.5 M3 16 H10" fill="none" stroke="#6a6a92" stroke-width="1.5" stroke-linecap="round"/></svg>
<svg style="position:absolute;left:788px;top:724px" width="16" height="16" viewBox="0 0 16 16"><path d="M5 12.5 V1.5 H14.5 V11.5" fill="none" stroke="#6a6a92" stroke-width="2" stroke-linejoin="round"/><circle cx="3" cy="12.5" r="2.6" fill="#6a6a92"/><circle cx="12.6" cy="11.8" r="2.6" fill="#6a6a92"/></svg>
<!-- tracks -->
<div style="left:840px;top:694px;width:557px;height:20px;background:#ece8e8"></div>
<div style="left:840px;top:722px;width:557px;height:20px;background:linear-gradient(180deg,#c8c7d6,#d6d5e1 50%,#cccbd9);border-top:1.5px solid #8f8cab;border-bottom:1.5px solid #8f8cab;border-radius:3px 0 0 3px"></div>
<svg style="position:absolute;left:852px;top:727px" width="12" height="10" viewBox="0 0 12 10"><path d="M0.5 3 H3 L6.5 0.5 V9.5 L3 7 H0.5 Z" fill="#3d3c66"/><path d="M8 3 Q9.5 5 8 7 M9.5 1.5 Q12 5 9.5 8.5" fill="none" stroke="#3d3c66" stroke-width="1.1"/></svg>
<div id="wave" style="left:870px;top:730px;width:526px;height:4px;background:linear-gradient(90deg,rgba(255,255,255,0) 0%,rgba(255,255,255,0) 22%,rgba(255,255,255,0.45) 26%,rgba(255,255,255,0.35) 100%);filter:blur(1px)"></div>
<div style="left:872px;top:727px;font-size:9px;color:#3d3c66;white-space:nowrap">Classical - Les Toreadors</div>
<!-- clip 1 -->
<div style="left:843px;top:632px;width:140px;height:55px;background:#2b5034;border-radius:5px"></div>
<div style="left:842px;top:644px;width:142px;height:31px;background:#fff;border:2px solid #5ccccf;border-radius:3px"></div>
<div style="left:890px;top:633px;width:20px;height:20px;border-radius:10px;background:#5ccccf"></div>
<div style="left:914px;top:633px;width:20px;height:20px;border-radius:10px;background:#5ccccf"></div>
<svg style="position:absolute;left:893px;top:636px" width="14" height="14" viewBox="0 0 14 14"><path d="M2.6 7.8 A4.7 4.7 0 1 1 6.2 11.3" fill="none" stroke="#14284a" stroke-width="1.5"/><circle cx="2.5" cy="7.6" r="1.1" fill="#14284a"/><circle cx="6" cy="11.3" r="1.1" fill="#14284a"/><path d="M6.6 4.6 V7.2 L8.6 8.2" fill="none" stroke="#14284a" stroke-width="1.3"/></svg>
<svg style="position:absolute;left:918px;top:638px" width="12" height="8" viewBox="0 0 12 8"><path d="M2 6 L6 2 L10 6" fill="none" stroke="#1b2a3a" stroke-width="1.8"/></svg>
<svg style="position:absolute;left:851px;top:652px" width="18" height="16" viewBox="0 0 18 16"><path d="M1.6 6 V13 Q1.6 14.2 2.8 14.2 H6.5" fill="none" stroke="#34335e" stroke-width="1.6"/><rect x="3.6" y="0.5" width="8.6" height="4.6" rx="1" fill="#34335e"/><path d="M9.5 2 L11 1.6" stroke="#fff" stroke-width="1"/><path d="M4.6 4.5 V6.8 H7.6" fill="none" stroke="#34335e" stroke-width="1.6"/><path d="M4.3 8.8 L6.8 10.4 L4.3 12 Z" fill="#34335e"/><path d="M9.6 13.5 V7.9 H15.6 V13.5" fill="none" stroke="#34335e" stroke-width="1.5"/><circle cx="9.3" cy="13.6" r="1.7" fill="#34335e"/><circle cx="15.1" cy="13.6" r="1.7" fill="#34335e"/></svg>
<div style="left:878px;top:653px;font-size:12.5px;color:#3c3b62;white-space:nowrap;letter-spacing:0.4px;-webkit-text-stroke:0.35px #3c3b62">Inside ...</div>
<div style="left:932px;top:652px;width:35px;height:16px;background:#f8f6f6;border-radius:3px"></div>
<div style="left:935px;top:652.5px;font-size:13px;color:#3c3b62;-webkit-text-stroke:0.3px #3c3b62">7</div>
<svg style="position:absolute;left:946px;top:655px" width="11" height="8" viewBox="0 0 11 8"><path d="M1.5 1.5 L5.5 5.5 L9.5 1.5" fill="none" stroke="#2d2c55" stroke-width="1.8"/></svg>
<!-- clip 2 -->
<div style="left:986px;top:632px;width:230px;height:55px;background:#fdfcfc;border-radius:5px"></div>
<div style="left:988px;top:645px;width:226px;height:29px;background:#fff"></div>
<svg style="position:absolute;left:995px;top:652px" width="18" height="16" viewBox="0 0 18 16"><path d="M1.6 6 V13 Q1.6 14.2 2.8 14.2 H6.5" fill="none" stroke="#34335e" stroke-width="1.6"/><rect x="3.6" y="0.5" width="8.6" height="4.6" rx="1" fill="#34335e"/><path d="M9.5 2 L11 1.6" stroke="#fff" stroke-width="1"/><path d="M4.6 4.5 V6.8 H7.6" fill="none" stroke="#34335e" stroke-width="1.6"/><path d="M4.3 8.8 L6.8 10.4 L4.3 12 Z" fill="#34335e"/><path d="M9.6 13.5 V7.9 H15.6 V13.5" fill="none" stroke="#34335e" stroke-width="1.5"/><circle cx="9.3" cy="13.6" r="1.7" fill="#34335e"/><circle cx="15.1" cy="13.6" r="1.7" fill="#34335e"/></svg>
<div style="left:1022px;top:653px;font-size:12.5px;color:#3c3b62;white-space:nowrap;letter-spacing:0.4px;-webkit-text-stroke:0.35px #3c3b62">We connect people, p...</div>
<div style="left:1165px;top:652px;width:36px;height:16px;background:#f8f6f6;border-radius:3px"></div>
<div style="left:1168px;top:652.5px;font-size:13px;color:#3c3b62;-webkit-text-stroke:0.3px #3c3b62">7</div>
<svg style="position:absolute;left:1181px;top:655px" width="11" height="8" viewBox="0 0 11 8"><path d="M1.5 1.5 L5.5 5.5 L9.5 1.5" fill="none" stroke="#2d2c55" stroke-width="1.8"/></svg>
<!-- clip 3 -->
<div style="left:1221px;top:632px;width:139px;height:55px;background:#2b5034;border-radius:5px"></div>
<div style="left:1221px;top:645px;width:139px;height:29px;background:#d0d6cf"></div>
<svg style="position:absolute;left:1229px;top:652px" width="18" height="16" viewBox="0 0 18 16"><path d="M1.6 6 V13 Q1.6 14.2 2.8 14.2 H6.5" fill="none" stroke="#34335e" stroke-width="1.6"/><rect x="3.6" y="0.5" width="8.6" height="4.6" rx="1" fill="#34335e"/><path d="M9.5 2 L11 1.6" stroke="#fff" stroke-width="1"/><path d="M4.6 4.5 V6.8 H7.6" fill="none" stroke="#34335e" stroke-width="1.6"/><path d="M4.3 8.8 L6.8 10.4 L4.3 12 Z" fill="#34335e"/><path d="M9.6 13.5 V7.9 H15.6 V13.5" fill="none" stroke="#34335e" stroke-width="1.5"/><circle cx="9.3" cy="13.6" r="1.7" fill="#34335e"/><circle cx="15.1" cy="13.6" r="1.7" fill="#34335e"/></svg>
<div style="left:1256px;top:653px;font-size:12.5px;color:#3c3b62;white-space:nowrap;letter-spacing:0.4px;-webkit-text-stroke:0.35px #3c3b62">Every ...</div>
<div style="left:1310px;top:651px;width:36px;height:17px;background:#fff;border-radius:3px"></div>
<div style="left:1313px;top:652.5px;font-size:13px;color:#3c3b62;-webkit-text-stroke:0.3px #3c3b62">7</div>
<svg style="position:absolute;left:1325px;top:655px" width="11" height="8" viewBox="0 0 11 8"><path d="M1.5 1.5 L5.5 5.5 L9.5 1.5" fill="none" stroke="#2d2c55" stroke-width="1.8"/></svg>
<!-- clip 4 -->
<div style="left:1365px;top:632px;width:40px;height:55px;background:#a3ef6c;border-radius:5px 0 0 5px"></div>
<div style="left:1365px;top:645px;width:40px;height:29px;background:#eefbe6"></div>
<svg style="position:absolute;left:1373px;top:652px" width="18" height="16" viewBox="0 0 18 16"><path d="M1.6 6 V13 Q1.6 14.2 2.8 14.2 H6.5" fill="none" stroke="#34335e" stroke-width="1.6"/><rect x="3.6" y="0.5" width="8.6" height="4.6" rx="1" fill="#34335e"/><path d="M9.5 2 L11 1.6" stroke="#fff" stroke-width="1"/><path d="M4.6 4.5 V6.8 H7.6" fill="none" stroke="#34335e" stroke-width="1.6"/><path d="M4.3 8.8 L6.8 10.4 L4.3 12 Z" fill="#34335e"/><path d="M9.6 13.5 V7.9 H15.6 V13.5" fill="none" stroke="#34335e" stroke-width="1.5"/><circle cx="9.3" cy="13.6" r="1.7" fill="#34335e"/><circle cx="15.1" cy="13.6" r="1.7" fill="#34335e"/></svg>
<!-- playhead -->
<div style="left:841px;top:609px;width:2px;height:143px;background:#5ccccf"></div>
<div style="left:836px;top:609px;width:0;height:0;border-left:6px solid transparent;border-right:6px solid transparent;border-top:8px solid #5ccccf"></div>
<!-- right panel -->
<div style="left:1397px;top:609px;width:93px;height:153px;background:#fefefe"></div>
<div style="left:1404px;top:620px;width:70px;height:4px;border-radius:2px;background:#e6e4ee"></div>
<div style="left:1404px;top:620px;width:28px;height:4px;border-radius:2px;background:#7d78ee"></div>
<div style="left:1426px;top:617px;width:11px;height:11px;border-radius:6px;background:#7d78ee"></div>
<div style="left:1483px;top:616px;font-size:9.5px;color:#55557a">80</div>
<div style="left:1433px;top:657px;width:43px;height:43px;border-radius:22px;border:1px solid #dcdae2;background:#fff"></div>
<div style="left:1443px;top:677px;width:23px;height:2px;background:#bdbcca"></div>
<div style="left:1453.5px;top:667px;width:2px;height:23px;background:#bdbcca"></div>
<div style="left:1428px;top:706px;font-size:10.5px;color:#b0afbf;white-space:nowrap;letter-spacing:0.3px">Add scene</div>

</body></html>
